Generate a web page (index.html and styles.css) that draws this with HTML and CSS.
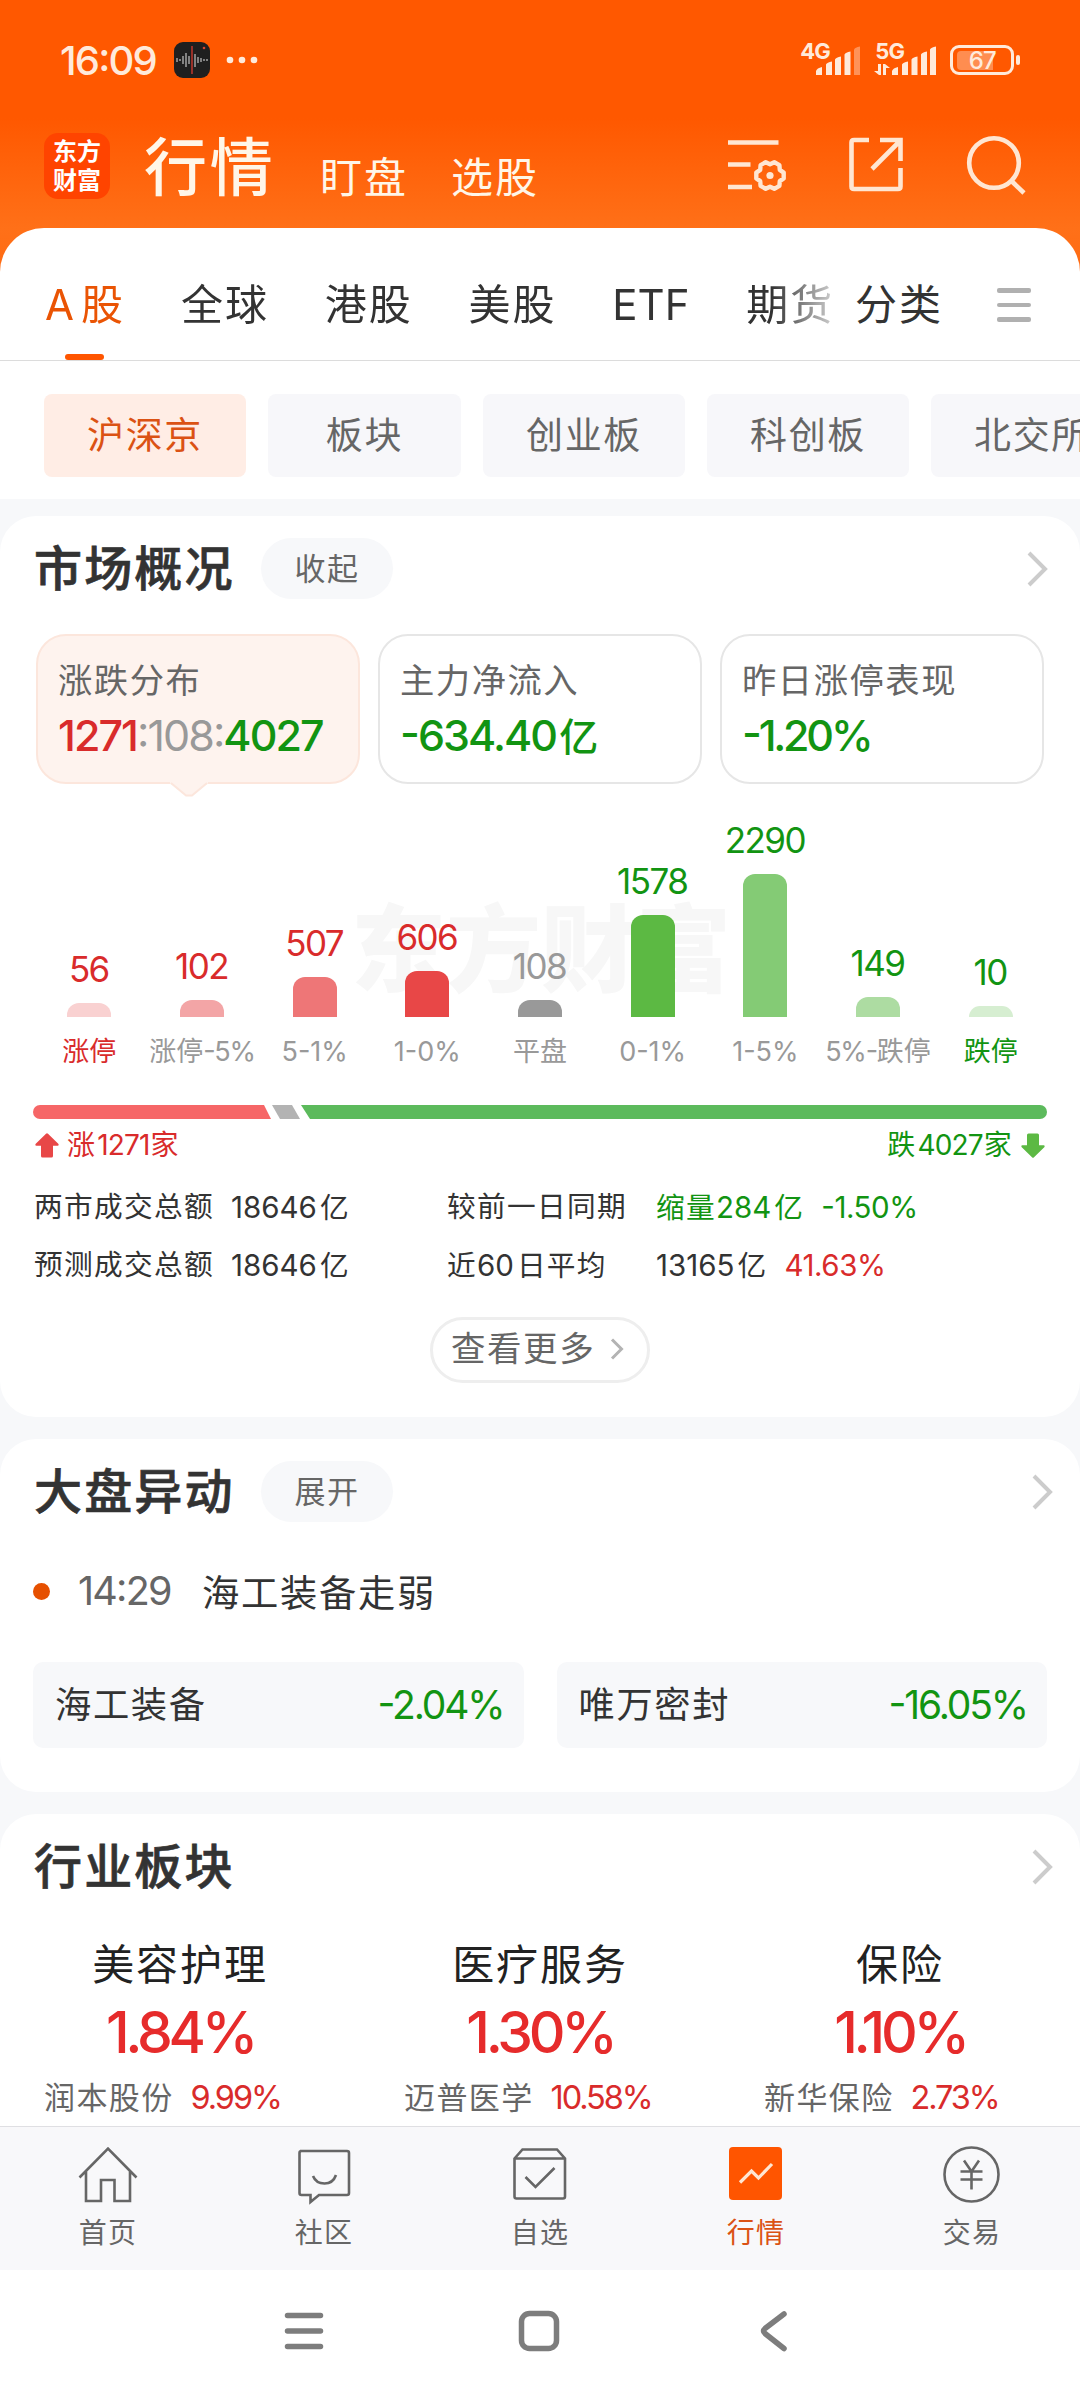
FILE: index.html
```html
<!DOCTYPE html>
<html lang="zh-CN">

<head>
    <meta charset="UTF-8">
    <meta name="viewport" content="width=device-width, initial-scale=1.0">
    <title>行情</title>
    <link rel="stylesheet" href="styles.css">
</head>

<body>
    <div class="top">
        <div class="status-bar">
            <span class="clock num">16:09</span>
            <svg class="rec-icon" viewBox="0 0 36 36">
                <rect width="36" height="36" rx="9" fill="#1f1f1f" />
                <path d="M3 16v4M6 17v2M9 14v8M12 11v14M15 14v8M21 12v13M24 15v6M27 16v4M30 17v2M33 17v2" stroke="#9a9a9a" stroke-width="1.6" />
                <path d="M18 4v28" stroke="#b8362c" stroke-width="1.6" />
                <circle cx="30" cy="6" r="1.3" fill="#d8452f" />
            </svg>
            <svg class="more-dots" viewBox="0 0 32 8" fill="#ffeadb">
                <circle cx="4" cy="4" r="3.3" />
                <circle cx="16" cy="4" r="3.3" />
                <circle cx="28" cy="4" r="3.3" />
            </svg>
            <div class="signal signal-4g">
                <span class="net num">4G</span>
                <svg viewBox="0 0 45 30" fill="#ffeadb">
                    <path d="M0 30v-4q1-3 6-4v8zM10 30V19.500q1-2 6-3V30zM19 30V14.500q1-2 6-3V30zM28.500 30V9.500q1-2 6-3V30z" />
                    <path d="M38 30V4.500q1-2 6-3V30z" opacity=".4" />
                </svg>
            </div>
            <div class="signal signal-5g">
                <span class="net num">5G</span>
                <svg viewBox="0 0 62 30" fill="#ffeadb">
                    <path d="M0 26h4v-7h3v11H5zM9 19h2l5 4h-4v7H9z" />
                    <path d="M18 30v-4q1-3 6-4v8zM28 30V19.500q1-2 6-3V30zM37.500 30V14.500q1-2 6-3V30zM47 30V9.500q1-2 6-3V30zM56 30V4.500q1-2 6-3V30z" />
                </svg>
            </div>
            <div class="battery">
                <div class="battery-fill"></div>
                <span class="battery-text num">67</span>
            </div>
            <div class="battery-tip"></div>
        </div>

        <div class="app-bar">
            <div class="logo">东方<br>财富</div>
            <h1>行情</h1>
            <span class="app-link">盯盘</span>
            <span class="app-link">选股</span>
            <div class="app-actions">
                <svg class="icon-settings" viewBox="0 0 60 56" fill="none" stroke="#ffe6d2" stroke-width="4.600">
                    <path d="M0 5.500h50.500M0 27.500h22.500M0 50h24" />
                    <path transform="translate(42 38.500)" stroke-width="4.400" stroke-linejoin="round"
                        d="M13.700 2.900L9.800 5.650L9.400 10.400L4.300 13.300L0 11.300L-4.300 13.300L-9.400 10.400L-9.800 5.650L-13.700 2.900V-2.900L-9.800 -5.650L-9.400 -10.400L-4.300 -13.300L0 -11.300L4.300 -13.300L9.400 -10.400L9.800 -5.650L13.700 -2.900Z" />
                    <circle cx="42" cy="38.500" r="3.600" fill="#ffe6d2" stroke="none" />
                </svg>
                <svg class="icon-share" viewBox="0 0 54 56" fill="none" stroke="#ffe6d2" stroke-width="4.600">
                    <path d="M20 3H5q-2.500 0-2.500 2.500v44q0 2.500 2.500 2.500h44q2.500 0 2.500-2.500V31" />
                    <path d="M31 3h20.500v21M51 4L23 32" />
                </svg>
                <svg class="icon-search" viewBox="0 0 60 60" fill="none" stroke="#ffe6d2" stroke-width="4.600">
                    <circle cx="27" cy="27" r="24.800" />
                    <path d="M44.500 45L57 57" />
                </svg>
            </div>
        </div>

        <div class="tabs">
            <div class="tab-scroll">
                <span class="tab active"><span class="tab-latin">A</span>股</span>
                <span class="tab">全球</span>
                <span class="tab">港股</span>
                <span class="tab">美股</span>
                <span class="tab tab-etf">ETF</span>
                <span class="tab">期货</span>
            </div>
            <span class="tab">分类</span>
            <div class="tab-menu"><i></i><i></i><i></i></div>
        </div>
    </div>

    <div class="chips">
        <span class="chip active">沪深京</span>
        <span class="chip chip-short">板块</span>
        <span class="chip">创业板</span>
        <span class="chip">科创板</span>
        <span class="chip">北交所</span>
    </div>

    <section class="card overview">
        <div class="card-head">
            <h2>市场概况</h2>
            <span class="pill">收起</span>
            <svg class="chevron" viewBox="0 0 22 36"><path d="M2 2l16 16L2 34" /></svg>
        </div>

        <div class="summary">
            <div class="box active">
                <div class="box-label">涨跌分布</div>
                <div class="box-value num"><span class="up">1271</span><span class="flat">:108:</span><span class="down">4027</span></div>
                <svg class="box-arrow" viewBox="0 0 38 15"><path d="M0 0h38v1.500L21.500 14h-5L0 1.500z" fill="#fef3ee" /><path d="M1 1l15 12.500h6L37 1" fill="none" stroke="#fce6dc" stroke-width="2" /></svg>
            </div>
            <div class="box">
                <div class="box-label">主力净流入</div>
                <div class="box-value num down">-634.40<span class="unit">亿</span></div>
            </div>
            <div class="box">
                <div class="box-label">昨日涨停表现</div>
                <div class="box-value num down tight">-1.20%</div>
            </div>
        </div>

        <div class="chart">
            <div class="watermark">东方财富</div>
            <div class="col up"><span class="count num">56</span><div class="bar" style="height: 14px; background: #f9d1d1"></div><span class="range up">涨停</span></div>
            <div class="col up"><span class="count num">102</span><div class="bar" style="height: 17px; background: #f3a5a6"></div><span class="range">涨停<span class="num">-5%</span></span></div>
            <div class="col up"><span class="count num">507</span><div class="bar" style="height: 40px; background: #ee7677"></div><span class="range num">5-1%</span></div>
            <div class="col up"><span class="count num">606</span><div class="bar" style="height: 46px; background: #e84747"></div><span class="range num">1-0%</span></div>
            <div class="col flat"><span class="count num">108</span><div class="bar" style="height: 17px; background: #999"></div><span class="range">平盘</span></div>
            <div class="col down"><span class="count num">1578</span><div class="bar" style="height: 102px; background: #5cb943"></div><span class="range num">0-1%</span></div>
            <div class="col down"><span class="count num">2290</span><div class="bar" style="height: 143px; background: #84cb75"></div><span class="range num">1-5%</span></div>
            <div class="col down"><span class="count num">149</span><div class="bar" style="height: 20px; background: #addca2"></div><span class="range"><span class="num">5%-</span>跌停</span></div>
            <div class="col down"><span class="count num">10</span><div class="bar" style="height: 11px; background: #d6eed1"></div><span class="range down">跌停</span></div>
        </div>

        <div class="ratio">
            <div class="ratio-up"></div>
            <div class="ratio-flat"></div>
            <div class="ratio-down"></div>
        </div>
        <div class="ratio-text">
            <svg viewBox="0 0 24 25" fill="#e84747"><path d="M11 .8q1-1 2 0L23.500 11q.8 1.500-.8 1.700H18V23q0 1.500-1.500 1.500h-9Q6 24.500 6 23V12.700H1.300Q-.3 12.500.5 11z" /></svg>
            <span class="up">涨<span class="num">1271</span>家</span>
            <span class="down ratio-right">跌<span class="num">4027</span>家</span>
            <svg viewBox="0 0 24 25" fill="#5cb943"><path d="M11 24.200q1 1 2 0L23.500 14q.8-1.500-.8-1.700H18V2Q18 .5 16.500.5h-9Q6 .5 6 2v10.300H1.300Q-.3 12.500.5 14z" /></svg>
        </div>

        <div class="stats">
            <span>两市成交总额</span>
            <span><span class="num">18646</span>亿</span>
            <span>较前一日同期</span>
            <span class="down">缩量<span class="num">284</span>亿<span class="num pct">-1.50%</span></span>
            <span>预测成交总额</span>
            <span><span class="num">18646</span>亿</span>
            <span>近<span class="num">60</span>日平均</span>
            <span><span class="num">13165</span>亿<span class="num pct up">41.63%</span></span>
        </div>

        <div class="more">
            查看更多
            <svg viewBox="0 0 14 22"><path d="M2 1.500l9.500 9.500L2 20.500" /></svg>
        </div>
    </section>

    <section class="card moves">
        <div class="card-head">
            <h2>大盘异动</h2>
            <span class="pill">展开</span>
            <svg class="chevron" viewBox="0 0 22 36"><path d="M2 2l16 16L2 34" /></svg>
        </div>
        <div class="event">
            <i class="event-dot"></i>
            <span class="event-time num">14:29</span>
            <span class="event-title">海工装备走弱</span>
        </div>
        <div class="stocks">
            <div class="stock"><span>海工装备</span><span class="num down">-2.04%</span></div>
            <div class="stock"><span>唯万密封</span><span class="num down">-16.05%</span></div>
        </div>
    </section>

    <section class="card sectors">
        <div class="card-head">
            <h2>行业板块</h2>
            <svg class="chevron" viewBox="0 0 22 36"><path d="M2 2l16 16L2 34" /></svg>
        </div>
        <div class="sector-list">
            <div class="sector">
                <div class="sector-name">美容护理</div>
                <div class="sector-pct num">1.84%</div>
                <div class="sector-stock">润本股份<span class="num">9.99%</span></div>
            </div>
            <div class="sector">
                <div class="sector-name">医疗服务</div>
                <div class="sector-pct num">1.30%</div>
                <div class="sector-stock">迈普医学<span class="num">10.58%</span></div>
            </div>
            <div class="sector">
                <div class="sector-name">保险</div>
                <div class="sector-pct num">1.10%</div>
                <div class="sector-stock">新华保险<span class="num">2.73%</span></div>
            </div>
        </div>
    </section>

    <nav class="bottom-nav">
        <div class="nav-item">
            <svg viewBox="0 0 60 60"><path d="M1.500 32.500L30 3.500L58.500 32.500M8 26v30h15V35h13.500v21H52V26" /></svg>
            首页
        </div>
        <div class="nav-item">
            <svg viewBox="0 0 60 60"><path d="M6 6H53q2 0 2 2v40q0 2-2 2H25l-8.500 7V50H7.500q-2 0-2-2V8q0-2 2-2M19 31q3 7.500 11.500 7.500T42 30" /></svg>
            社区
        </div>
        <div class="nav-item">
            <svg viewBox="0 0 60 60"><path d="M4.500 13.500l8-9h34.500L55 13.500v38q0 2-2 2H6.500q-2 0-2-2zM4.500 13.500h50M15.500 32l10 10L44.500 23" /></svg>
            自选
        </div>
        <div class="nav-item active">
            <svg viewBox="0 0 60 60"><rect x="3" y="2" width="53" height="53" rx="4" fill="#ff5500" stroke="none" /><path d="M14 37.500L25.500 26l7 7L46 19" stroke="#ffe6d2" stroke-width="3.200" /></svg>
            行情
        </div>
        <div class="nav-item">
            <svg viewBox="0 0 60 60"><circle cx="29.500" cy="29.500" r="27" /><path d="M22 15.500L29.500 26.500L37 15.500M29.500 26v18.500M18.500 26.500h22M18.500 34.500h22" /></svg>
            交易
        </div>
    </nav>

    <div class="system-nav">
        <svg viewBox="0 0 44 44"><path d="M5.500 6.500h33M5.500 22h33M5.500 37.500h33" /></svg>
        <svg viewBox="0 0 44 44"><rect x="5.500" y="4.500" width="35" height="35" rx="8" /></svg>
        <svg viewBox="0 0 44 44"><path d="M34 5L15 19.500q-3 2.500 0 5L34 39.500" /></svg>
    </div>
</body>

</html>
```
FILE: styles.css
```css
* {
    margin: 0;
    padding: 0;
    box-sizing: border-box;
    letter-spacing: 0.045em;
}

body {
    width: 1080px;
    height: 2400px;
    overflow: hidden;
    background: #f7f8fa;
    color: #333;
    font-family: Inter, "Noto Sans CJK SC", sans-serif;
    font-size: 28px;
}

svg {
    display: block;
    overflow: visible;
}

.num,
.num span {
    letter-spacing: -0.045em;
    font-feature-settings: "case";
}

.up {
    color: #d92b2b;
}

.down {
    color: #129412;
}

.flat {
    color: #999;
}

/* header */
.top {
    background: linear-gradient(#ff5800 0, #ff5800 118px, #ff7018 228px, #ff6a12 280px);
}

.status-bar {
    display: flex;
    height: 120px;
    padding: 42px 60px 0 60px;
    color: #ffeadb;
}

.clock {
    width: 115px;
    font-size: 40px;
    font-weight: 500;
    line-height: 37px;
}

.rec-icon {
    width: 36px;
    height: 36px;
}

.more-dots {
    width: 32px;
    height: 8px;
    margin: 14px 0 0 16px;
}

.signal {
    position: relative;
}

.signal svg {
    height: 30px;
    margin-top: 3px;
}

.signal-4g {
    width: 61px;
    margin-left: 542px;
    padding-left: 16px;
}

.signal-4g svg {
    width: 45px;
}

.signal-5g {
    width: 62px;
    margin-left: 13px;
}

.signal-5g svg {
    width: 62px;
}

.net {
    position: absolute;
    top: -3px;
    left: 0;
    font-size: 22px;
    font-weight: 700;
    line-height: 24px;
}

.signal-5g .net {
    left: 1px;
}

.battery {
    position: relative;
    width: 64px;
    height: 30px;
    margin: 3px 0 0 14px;
    border: 3px solid #ffeadb;
    border-radius: 9px;
}

.battery-fill {
    width: 36px;
    height: 19px;
    margin: 3px 0 0 4px;
    border-radius: 4px 0 0 4px;
    background: #ff8d50;
}

.battery-text {
    position: absolute;
    inset: 0;
    font-size: 24px;
    font-weight: 500;
    line-height: 25px;
    text-align: center;
}

.battery-tip {
    width: 4px;
    height: 10px;
    margin: 13px 0 0 2px;
    border-radius: 2px;
    background: #ffeadb;
}

.app-bar {
    display: flex;
    height: 108px;
    padding: 13px 52px 0 44px;
    color: #fff6e8;
}

.logo {
    width: 66px;
    height: 66px;
    padding: 4px 0 0 9px;
    border-radius: 14px;
    background: #ff4400;
    color: #fff;
    font-size: 24px;
    font-weight: 700;
    line-height: 29px;
    letter-spacing: 0;
}

.app-bar h1 {
    margin-left: 34px;
    width: 176px;
    font-size: 63px;
    font-weight: 500;
    line-height: 68px;
}

.app-link {
    width: 131px;
    padding-top: 24px;
    font-size: 42px;
    line-height: 42px;
}

.app-actions {
    display: flex;
    margin-left: 146px;
    padding-top: 4px;
}

.icon-settings {
    width: 60px;
    height: 56px;
}

.icon-share {
    width: 54px;
    height: 56px;
    margin-left: 61px;
}

.icon-search {
    width: 60px;
    height: 60px;
    margin: -1px 0 0 64px;
}

.tabs {
    display: flex;
    height: 133px;
    padding-left: 44px;
    border-bottom: 1px solid #dcdcdc;
    border-radius: 44px 44px 0 0;
    background: #fff;
}

.tab-scroll {
    display: flex;
    gap: 56px;
    width: 811px;
    overflow: hidden;
    -webkit-mask-image: linear-gradient(90deg, #000 728px, transparent 808px);
    mask-image: linear-gradient(90deg, #000 728px, transparent 808px);
}

.tab {
    position: relative;
    flex: none;
    padding-top: 52px;
    font-size: 42px;
    line-height: 50px;
}

.tab.active {
    width: 81px;
    color: #ea5404;
}

.tab-latin {
    margin: 0 5px 0 1px;
}

.tab.active::after {
    content: "";
    position: absolute;
    left: 21px;
    bottom: 0;
    width: 39px;
    height: 6px;
    border-radius: 3px;
    background: #ff5500;
}

.tab-etf {
    width: 78px;
    letter-spacing: 0;
}

.tab-menu {
    display: flex;
    flex-direction: column;
    gap: 10px;
    margin: 60px 0 0 54px;
}

.tab-menu i {
    width: 34px;
    height: 4.500px;
    border-radius: 2px;
    background: #b0b0b0;
}

.chips {
    display: flex;
    gap: 22px;
    height: 138px;
    padding: 33px 0 0 44px;
    background: #fff;
}

.chip {
    flex: none;
    width: 202px;
    height: 83px;
    border-radius: 8px;
    background: #f7f7fa;
    color: #666;
    font-size: 37px;
    line-height: 83px;
    text-align: center;
}

.chip-short {
    width: 193px;
}

.chip.active {
    background: #ffede5;
    color: #db5214;
}

/* cards */
.card {
    border-radius: 36px;
    background: #fff;
}

.card-head {
    display: flex;
    align-items: center;
    height: 61px;
    padding: 0 26px 0 34px;
}

.card-head h2 {
    width: 227px;
    font-size: 48px;
    font-weight: 500;
    line-height: 61px;
    -webkit-text-stroke: 0.7px;
}

.pill {
    width: 132px;
    height: 61px;
    border-radius: 31px;
    background: #f7f8fa;
    color: #666;
    font-size: 31px;
    line-height: 61px;
    text-align: center;
}

.chevron {
    width: 22px;
    height: 36px;
    margin-left: auto;
    fill: none;
    stroke: #ccc;
    stroke-width: 4;
}

.overview {
    height: 901px;
    margin-top: 17px;
    padding-top: 22px;
}

.overview .chevron {
    margin-right: 5px;
}

.summary {
    display: flex;
    gap: 18px;
    margin: 35px 36px 0;
}

.box {
    position: relative;
    flex: 1;
    height: 150px;
    padding: 24px 0 0 20px;
    border: 2px solid #e6e6e6;
    border-radius: 30px;
}

.box.active {
    border-color: #fce6dc;
    background: #fef3ee;
}

.box-label {
    color: #666;
    font-size: 34.300px;
    line-height: 42px;
}

.box-value {
    margin-top: 8px;
    font-size: 43px;
    font-weight: 500;
    line-height: 50px;
}

.box-value .flat {
    font-weight: 400;
}

.box-value .unit {
    margin-left: 3px;
    font-size: 39px;
}

.box-value.tight {
    letter-spacing: -0.075em;
}

.box-arrow {
    position: absolute;
    left: 132px;
    bottom: -15px;
    width: 38px;
    height: 15px;
}

.chart {
    position: relative;
    display: grid;
    grid-template-columns: repeat(9, 1fr);
    height: 289px;
    margin: 0 33px;
}

.watermark {
    position: absolute;
    left: 318px;
    top: 100px;
    color: #f7f7f7;
    font-size: 95px;
    font-weight: 900;
    line-height: 134px;
    letter-spacing: 0;
}

.col {
    position: relative;
    display: flex;
    flex-direction: column;
    justify-content: flex-end;
    align-items: center;
}

.count {
    margin-bottom: 13px;
    padding-right: 1px;
    font-size: 35px;
    line-height: 42px;
}

.bar {
    width: 44px;
    border-radius: 12px 12px 0 0;
}

.range {
    height: 56px;
    padding-top: 15px;
    color: #999;
    font-size: 27px;
    line-height: 40px;
    white-space: nowrap;
    letter-spacing: 0;
}

.range.up {
    color: #d92b2b;
}

.range.down {
    color: #129412;
}

.ratio {
    display: flex;
    height: 14px;
    margin: 32px 33px 0;
}

.ratio-up {
    width: 238px;
    border-radius: 7px 0 0 7px;
    background: #f66667;
    clip-path: polygon(0 0, 231px 0, 100% 100%, 0 100%);
}

.ratio-flat {
    width: 28px;
    margin-left: 1px;
    background: #b3b3b3;
    clip-path: polygon(0 0, 20px 0, 100% 100%, 8px 100%);
}

.ratio-down {
    flex: 1;
    margin-left: 1px;
    border-radius: 0 7px 7px 0;
    background: #5cba5c;
    clip-path: polygon(0 0, 100% 0, 100% 100%, 9px 100%);
}

.ratio-text {
    display: flex;
    align-items: center;
    gap: 8px;
    height: 36px;
    margin: 8px 35px 0;
    font-size: 28px;
    line-height: 36px;
}

.ratio-text .num {
    margin: 0 1px;
    letter-spacing: -0.03em;
}

.ratio-text svg {
    width: 24px;
    height: 25px;
}

.ratio-right {
    margin-left: auto;
}

.stats {
    display: grid;
    grid-template-columns: 197px 216px 209px auto;
    grid-auto-rows: 58px;
    margin: 15px 0 0 34px;
    font-size: 28.700px;
    line-height: 58px;
}

.stats .num {
    margin-right: 3px;
    font-size: 29.500px;
    letter-spacing: 0;
}

.stats .pct {
    margin-left: 17px;
    letter-spacing: -0.015em;
}

.more {
    display: flex;
    align-items: center;
    gap: 15px;
    width: 220px;
    height: 66px;
    margin: 23px auto 0;
    padding: 0 0 3px 18px;
    border: 3px solid #eee;
    border-radius: 33px;
    color: #666;
    font-size: 34.500px;
    line-height: 50px;
    white-space: nowrap;
}

.more svg {
    flex: none;
    width: 14px;
    height: 22px;
    fill: none;
    stroke: #b3b3b3;
    stroke-width: 3;
}

.moves {
    height: 353px;
    margin-top: 22px;
    padding-top: 22px;
}

.event {
    display: flex;
    align-items: center;
    height: 60px;
    margin-top: 39px;
    padding-left: 33px;
}

.event-dot {
    width: 17px;
    height: 17px;
    border-radius: 50%;
    background: #e65000;
}

.event-time {
    width: 124px;
    margin-left: 28px;
    color: #666;
    font-size: 39.500px;
}

.event-title {
    font-size: 37.300px;
}

.stocks {
    display: flex;
    gap: 33px;
    margin: 41px 33px 0;
}

.stock {
    display: flex;
    flex: 1;
    justify-content: space-between;
    height: 86px;
    padding: 0 20px 0 22px;
    border-radius: 10px;
    background: #f7f8fa;
    font-size: 36.300px;
    line-height: 86px;
}

.stock .num {
    font-size: 39px;
    letter-spacing: -0.055em;
}

.sectors {
    height: 312px;
    margin-top: 22px;
    padding-top: 22px;
    border-radius: 36px 36px 0 0;
    overflow: hidden;
}

.sector-list {
    display: grid;
    grid-template-columns: repeat(3, 1fr);
    margin-top: 38px;
    text-align: center;
}

.sector-name {
    color: #222;
    font-size: 42px;
    line-height: 60px;
}

.sector-pct {
    color: #e62b2b;
    font-size: 57px;
    font-weight: 500;
    line-height: 76px;
    letter-spacing: -0.075em;
}

.sector-stock {
    padding-left: 44px;
    color: #666;
    font-size: 31px;
    line-height: 54px;
    text-align: left;
}

.sector-stock .num {
    margin-left: 17px;
    color: #d92b2b;
    font-size: 32.500px;
    letter-spacing: -0.065em;
}

/* bottom */
.bottom-nav {
    display: grid;
    grid-template-columns: repeat(5, 1fr);
    height: 144px;
    padding-top: 18px;
    border-top: 1px solid #dfdfe3;
    background: #f8f8fa;
}

.nav-item {
    display: flex;
    flex-direction: column;
    align-items: center;
    color: #666;
    font-size: 28px;
    line-height: 56px;
}

.nav-item svg {
    width: 60px;
    height: 60px;
    fill: none;
    stroke: #666;
    stroke-width: 2.600;
}

.nav-item.active {
    color: #db5214;
}

.system-nav {
    display: flex;
    gap: 190px;
    height: 130px;
    padding: 39px 0 0 282px;
    background: #fff;
}

.system-nav svg {
    width: 44px;
    height: 44px;
    fill: none;
    stroke: #7d7d7d;
    stroke-width: 5.500;
    stroke-linecap: round;
}
```
